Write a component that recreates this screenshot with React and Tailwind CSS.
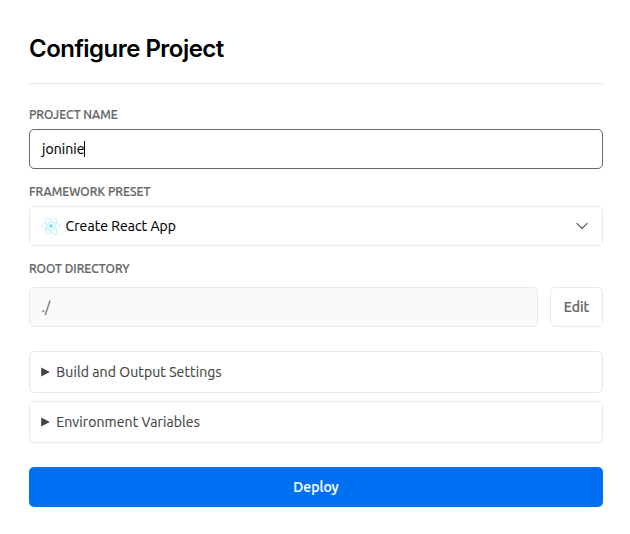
function Label({ children, className }) {
  return (
    <div className={`h-4 text-[12px] leading-4 font-medium whitespace-nowrap text-[#666] [-webkit-text-stroke:0.2px_#666] ${className}`}>
      {children}
    </div>
  );
}

function ReactLogo() {
  return (
    <svg width="20" height="18" viewBox="0 0 20 18" fill="none" stroke="#61dafb" strokeOpacity="0.65" strokeWidth="0.5" className="shrink-0">
      <circle cx="10" cy="9" r="1.8" fill="#61dafb" stroke="none" />
      <ellipse cx="10" cy="9" rx="9.5" ry="3.7" />
      <ellipse cx="10" cy="9" rx="9.5" ry="3.7" transform="rotate(60 10 9)" />
      <ellipse cx="10" cy="9" rx="9.5" ry="3.7" transform="rotate(120 10 9)" />
    </svg>
  );
}

function Disclosure({ children }) {
  return (
    <div className="flex h-[42px] items-center rounded-[5px] border border-[#eaeaea] pl-[11px] text-[14px] text-[#444]">
      <svg width="9" height="10" viewBox="0 0 9 10" className="mr-[6.3px] shrink-0">
        <path d="M0.2 0.5 L8.8 5 L0.2 9.5 Z" fill="#444" />
      </svg>
      <span className="tracking-[0.1px] whitespace-nowrap [-webkit-text-stroke:0.15px_#444]">{children}</span>
    </div>
  );
}

export default function App() {
  return (
    <main className="flex h-[534px] w-[630px] flex-col bg-white pr-[27px] pl-[29px] font-['Ubuntu','Noto_Sans',sans-serif] text-black">
      <h1 className="h-[84px] border-b border-[#eaeaea] pt-[33px] font-['Inter',sans-serif] text-[24px] leading-8 font-semibold tracking-[-0.53px]">
        Configure Project
      </h1>

      <Label className="mt-[23px]">PROJECT NAME</Label>
      <div className="mt-[6px] flex h-10 items-center rounded-[5px] border border-[#666] pl-3 text-[14px]">
        <span className="tracking-[0.05px] [-webkit-text-stroke:0.15px_black]">joninie</span>
        <span className="h-4 w-px bg-black" />
      </div>

      <Label className="mt-[15px] tracking-[0.03px]">FRAMEWORK PRESET</Label>
      <div className="mt-[6px] flex h-10 items-center rounded-[5px] border border-[#eaeaea] pr-[14px] pl-[11px] text-[14px]">
        <ReactLogo />
        <span className="ml-[4.6px] flex-1 tracking-[0.06px] [-webkit-text-stroke:0.15px_black]">Create React App</span>
        <svg width="12" height="8" viewBox="0 0 12 8" fill="none" stroke="#666" strokeWidth="1.2" strokeLinecap="round" strokeLinejoin="round">
          <path d="M1 1.5 L6 6.5 L11 1.5" />
        </svg>
      </div>

      <Label className="mt-[15px]">ROOT DIRECTORY</Label>
      <div className="mt-[10px] flex h-10 gap-3">
        <div className="flex flex-1 items-center rounded-[5px] border border-[#eaeaea] bg-[#fafafa] pl-[11.5px] text-[14px] text-[#666] [-webkit-text-stroke:0.15px_#666]">
          ./
        </div>
        <button className="flex w-[53px] items-center justify-center rounded-[5px] border border-[#eaeaea] text-[14px] font-medium text-[#666] [-webkit-text-stroke:0.2px_#666]">
          Edit
        </button>
      </div>

      <div className="mt-6 flex flex-col gap-2">
        <Disclosure>Build and Output Settings</Disclosure>
        <Disclosure>Environment Variables</Disclosure>
      </div>

      <button className="mt-6 flex h-10 items-center justify-center rounded-[5px] bg-[#0070f3] text-[14px] font-medium text-white [-webkit-text-stroke:0.2px_white]">
        Deploy
      </button>
    </main>
  );
}
